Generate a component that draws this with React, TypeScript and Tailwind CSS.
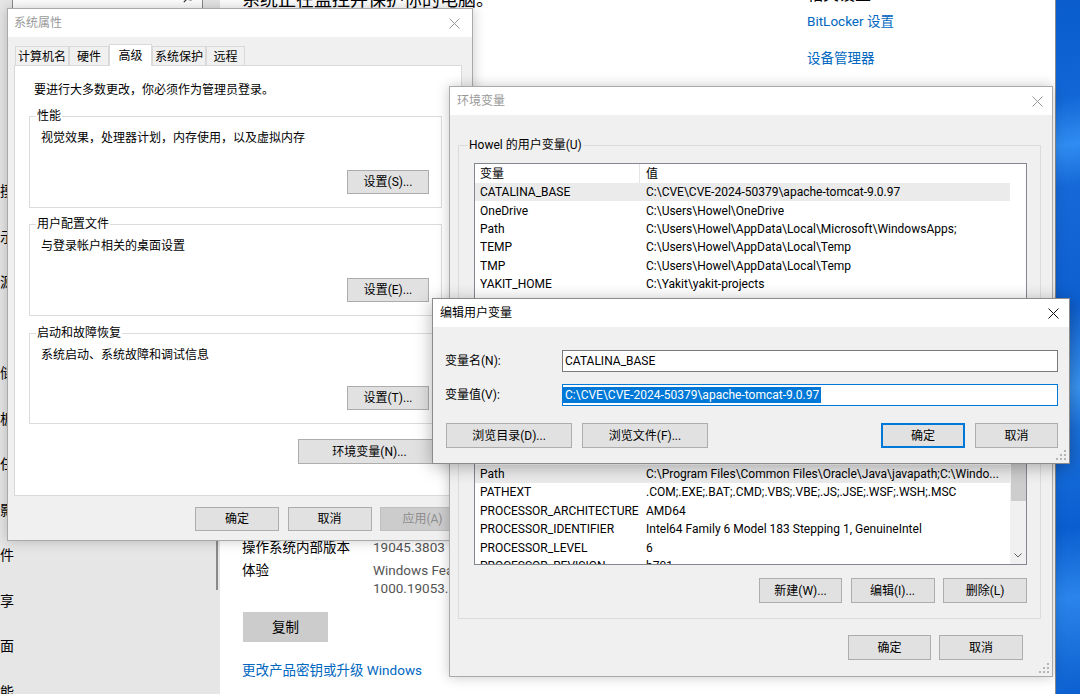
import React from 'react';

const CloseX = ({ color }: { color: string }) => (
  <svg width="11" height="11" viewBox="0 0 11 11">
    <path d="M0.5 0.5L10.5 10.5M10.5 0.5L0.5 10.5" stroke={color} strokeWidth="1" />
  </svg>
);

const Grip = () => (
  <svg width="11" height="11" viewBox="0 0 11 11" className="absolute right-[2px] bottom-[2px]">
    {[
      [8, 0],
      [8, 4],
      [4, 4],
      [8, 8],
      [4, 8],
      [0, 8],
    ].map(([x, y], i) => (
      <rect key={i} x={x} y={y} width="2" height="2" fill="#b4b4b4" />
    ))}
  </svg>
);

function Btn({
  children,
  className = '',
  variant,
}: {
  children: React.ReactNode;
  className?: string;
  variant?: 'default' | 'disabled';
}) {
  const look =
    variant === 'default'
      ? 'bg-[#e1e1e1] border border-[#0078d7] shadow-[inset_0_0_0_1px_#0078d7] text-black'
      : variant === 'disabled'
      ? 'bg-[#cccccc] border border-[#bfbfbf] text-[#8d8d8d]'
      : 'bg-[#e1e1e1] border border-[#adadad] text-black';
  return (
    <div className={`flex shrink-0 items-center justify-center text-[12px] ${look} ${className}`}>{children}</div>
  );
}

function Group({
  label,
  labelClass,
  className = '',
  children,
}: {
  label: string;
  labelClass: string;
  className?: string;
  children?: React.ReactNode;
}) {
  return (
    <div className={`relative border border-[#dcdcdc] ${className}`}>
      <span className={`absolute -top-[9px] px-[1px] leading-[16px] ${labelClass}`}>{label}</span>
      {children}
    </div>
  );
}

function Row({ name, value, selected }: { name: string; value: string; selected?: boolean }) {
  return (
    <div className={`flex h-[18.4px] shrink-0 items-center whitespace-nowrap ${selected ? 'bg-[#ebebeb]' : ''}`}>
      <div className="w-[165px] shrink-0 overflow-hidden pl-[5px]">{name}</div>
      <div className="flex-1 overflow-hidden pl-[6px]">{value}</div>
    </div>
  );
}

function ListHeader() {
  return (
    <div className="flex h-[19px] shrink-0 items-center">
      <div className="w-[165px] shrink-0 self-stretch flex items-center border-r border-[#e5e5e5] pl-[5px]">变量</div>
      <div className="pl-[6px]">值</div>
    </div>
  );
}

const userVars = [
  ['CATALINA_BASE', 'C:\\CVE\\CVE-2024-50379\\apache-tomcat-9.0.97'],
  ['OneDrive', 'C:\\Users\\Howel\\OneDrive'],
  ['Path', 'C:\\Users\\Howel\\AppData\\Local\\Microsoft\\WindowsApps;'],
  ['TEMP', 'C:\\Users\\Howel\\AppData\\Local\\Temp'],
  ['TMP', 'C:\\Users\\Howel\\AppData\\Local\\Temp'],
  ['YAKIT_HOME', 'C:\\Yakit\\yakit-projects'],
];

const sysVars = [
  ['NUMBER_OF_PROCESSORS', '20'],
  ['OS', 'Windows_NT'],
  ['Path', 'C:\\Program Files\\Common Files\\Oracle\\Java\\javapath;C:\\Windo...'],
  ['PATHEXT', '.COM;.EXE;.BAT;.CMD;.VBS;.VBE;.JS;.JSE;.WSF;.WSH;.MSC'],
  ['PROCESSOR_ARCHITECTURE', 'AMD64'],
  ['PROCESSOR_IDENTIFIER', 'Intel64 Family 6 Model 183 Stepping 1, GenuineIntel'],
  ['PROCESSOR_LEVEL', '6'],
  ['PROCESSOR_REVISION', 'b701'],
];

const navItems = ['触摸板', '显示', '电源和睡眠', '', '存储', '平板模式', '多任务处理', '投影到此电脑', '组件', '共享', '桌面', '功能'];

function SettingsBackdrop() {
  return (
    <div className="absolute inset-0 flex">
      {/* nav */}
      <aside className="relative w-[220px] shrink-0 bg-[#e6e6e6]">
        <div className="ml-[12px] mr-[17px] -mt-[20px] h-[32px] bg-white border border-[#8a8a8a] flex items-center justify-end pr-[6px]">
          <svg width="13" height="13" viewBox="0 0 13 13">
            <circle cx="7.5" cy="5.5" r="4.5" fill="none" stroke="#333" strokeWidth="1" />
            <path d="M4.3 8.7L0.8 12.2" stroke="#333" strokeWidth="1.2" />
          </svg>
        </div>
        <div className="-ml-[14px] mt-[157px] flex flex-col text-[14px] text-black">
          {navItems.map((t, i) => (
            <div key={i} className="h-[45.5px] flex items-center whitespace-nowrap">
              {t}
            </div>
          ))}
        </div>
        <div className="absolute right-[2px] top-[528px] w-[2px] h-[62px] bg-[#8a8a8a]" />
      </aside>

      {/* content */}
      <div className="flex w-[836px] shrink-0 border-r border-[#8a8a8a] bg-white text-[13.5px]">
        <div className="w-[565px] shrink-0 pl-[22px]">
          <div className="-mt-[12px] h-[24px] leading-[24px] text-[18px]">系统正在监控并保护你的电脑。</div>
          <div className="h-[525px]" />
          <div className="flex h-[20px] items-center">
            <span className="w-[131px] shrink-0">操作系统内部版本</span>
            <span className="text-[#555]">19045.3803</span>
          </div>
          <div className="mt-[4px] flex leading-[18px]">
            <span className="w-[131px] shrink-0">体验</span>
            <div className="text-[#555]">
              <div>Windows Feature Experience Pack</div>
              <div>1000.19053.1000.0</div>
            </div>
          </div>
          <div className="mt-[15px] ml-[1px] flex h-[30px] w-[85px] items-center justify-center bg-[#cccccc]">复制</div>
          <div className="mt-[18px] h-[20px] leading-[20px] text-[#0067c0]">更改产品密钥或升级 Windows</div>
        </div>
        <div className="pl-[22px] text-[#0067c0]">
          <div className="-mt-[14px] h-[18px] leading-[18px] text-[16px] text-black">相关设置</div>
          <div className="mt-[7px] h-[20px] leading-[20px]">BitLocker 设置</div>
          <div className="mt-[17px] h-[20px] leading-[20px]">设备管理器</div>
        </div>
      </div>

      {/* desktop */}
      <div className="flex-1 bg-[linear-gradient(172deg,#0a5ccc_0%,#1266d6_14%,#2f8cf0_21%,#1668d8_27%,#0d5fd0_44%,#3a95f2_56%,#1a70dc_62%,#0b5ed0_76%,#2a84ea_86%,#0c5fcf_100%)]" />
    </div>
  );
}

function SystemProps() {
  const tabs = [
    { t: '计算机名', w: 'w-[54px]' },
    { t: '硬件', w: 'w-[40px]' },
    { t: '高级', w: 'w-[43px]', active: true },
    { t: '系统保护', w: 'w-[54px]' },
    { t: '远程', w: 'w-[39px]' },
  ];
  return (
    <div className="absolute left-[7px] top-[8px] flex h-[533px] w-[466px] flex-col border border-[#aaaaaa] bg-[#f0f0f0] shadow-[0_0_12px_rgba(0,0,0,0.22)]">
      <div className="flex h-[28px] shrink-0 items-center justify-between bg-white pl-[6px] pr-[12px] text-[#999]">
        <span>系统属性</span>
        <CloseX color="#999" />
      </div>
      <div className="flex flex-col pl-[6px] pr-[10px] pt-[7px]">
        <div className="flex h-[22px] items-end pl-[1px]">
          {tabs.map((tab) =>
            tab.active ? (
              <div
                key={tab.t}
                className={`relative z-10 flex h-[22px] items-start justify-center border border-b-0 border-[#d9d9d9] bg-white pt-[2px] ${tab.w}`}
              >
                {tab.t}
              </div>
            ) : (
              <div
                key={tab.t}
                className={`flex h-[20px] items-center justify-center border border-b-0 border-[#d9d9d9] bg-[#f0f0f0] ${tab.w}`}
              >
                {tab.t}
              </div>
            )
          )}
        </div>
        <div className="-mt-[1px] flex h-[431px] flex-col border border-[#d9d9d9] bg-white pl-[14px] pr-[19px] pt-[16px]">
          <div className="h-[16px] pl-[5px] leading-[16px]">要进行大多数更改，你必须作为管理员登录。</div>

          <Group label="性能" labelClass="left-[6px] bg-white" className="mt-[18px] flex h-[92px] flex-col pl-[11px] pr-[12px] pt-[13px]">
            <div className="h-[16px] leading-[16px]">视觉效果，处理器计划，内存使用，以及虚拟内存</div>
            <Btn className="mt-[24px] h-[24px] w-[82px] self-end">设置(S)...</Btn>
          </Group>

          <Group label="用户配置文件" labelClass="left-[6px] bg-white" className="mt-[16px] flex h-[92px] flex-col pl-[11px] pr-[12px] pt-[13px]">
            <div className="h-[16px] leading-[16px]">与登录帐户相关的桌面设置</div>
            <Btn className="mt-[24px] h-[24px] w-[82px] self-end">设置(E)...</Btn>
          </Group>

          <Group label="启动和故障恢复" labelClass="left-[6px] bg-white" className="mt-[17px] flex h-[91px] flex-col pl-[11px] pr-[12px] pt-[13px]">
            <div className="h-[16px] leading-[16px]">系统启动、系统故障和调试信息</div>
            <Btn className="mt-[23px] h-[24px] w-[82px] self-end">设置(T)...</Btn>
          </Group>

          <Btn className="mt-[15px] mr-[1px] h-[25px] w-[143px] self-end">环境变量(N)...</Btn>
        </div>
        <div className="-mr-[3px] mt-[11px] flex justify-end gap-[8.5px]">
          <Btn className="h-[24px] w-[84px]">确定</Btn>
          <Btn className="h-[24px] w-[84px]">取消</Btn>
          <Btn className="h-[24px] w-[85px]" variant="disabled">
            应用(A)
          </Btn>
        </div>
      </div>
    </div>
  );
}

function EnvVars() {
  return (
    <div className="absolute left-[449px] top-[86px] flex h-[591px] w-[604px] flex-col border border-[#aaaaaa] bg-[#f0f0f0] shadow-[0_0_12px_rgba(0,0,0,0.22)]">
      <div className="flex h-[28px] shrink-0 items-center justify-between bg-white pl-[7px] pr-[9px] text-[#999]">
        <span>环境变量</span>
        <CloseX color="#999" />
      </div>
      <div className="flex flex-col pl-[8px] pr-[11px]">
        {/* user variables */}
        <Group label="Howel 的用户变量(U)" labelClass="left-[9px] bg-[#f0f0f0]" className="mt-[30px] flex flex-col pb-[16px] pl-[15px] pr-[13px] pt-[17px]">
          <div className="flex h-[160px] border border-[#828790] bg-white">
            <div className="flex flex-1 flex-col overflow-hidden">
              <ListHeader />
              {userVars.map(([n, v], i) => (
                <Row key={n} name={n} value={v} selected={i === 0} />
              ))}
            </div>
            <div className="w-[16px] shrink-0" />
          </div>
          <div className="mt-[8px] flex h-[25px] justify-end gap-[8.5px]">
            <Btn className="h-[25px] w-[83px]">新建(N)...</Btn>
            <Btn className="h-[25px] w-[84px]">编辑(E)...</Btn>
            <Btn className="h-[25px] w-[84px]">删除(D)</Btn>
          </div>
        </Group>

        {/* system variables */}
        <Group label="系统变量(S)" labelClass="left-[9px] bg-[#f0f0f0]" className="mt-[17px] flex flex-col pb-[15px] pl-[15px] pr-[13px] pt-[17px]">
          <div className="flex h-[157px] border border-[#828790] bg-white">
            <div className="flex flex-1 flex-col overflow-hidden">
              <ListHeader />
              {sysVars.map(([n, v]) => (
                <Row key={n} name={n} value={v} selected={n === 'Path'} />
              ))}
            </div>
            <div className="flex w-[16px] shrink-0 flex-col bg-[#f0f0f0]">
              <div className="flex h-[17px] shrink-0 items-center justify-center">
                <svg width="8" height="5" viewBox="0 0 8 5">
                  <path d="M0.5 4.5L4 1L7.5 4.5" fill="none" stroke="#606060" />
                </svg>
              </div>
              <div className="flex-1">
                <div className="mx-auto mt-[29px] h-[46px] w-[15px] bg-[#cdcdcd]" />
              </div>
              <div className="flex h-[17px] shrink-0 items-center justify-center">
                <svg width="8" height="5" viewBox="0 0 8 5">
                  <path d="M0.5 0.5L4 4L7.5 0.5" fill="none" stroke="#606060" />
                </svg>
              </div>
            </div>
          </div>
          <div className="mt-[13px] flex h-[25px] justify-end gap-[8.5px]">
            <Btn className="h-[25px] w-[83px]">新建(W)...</Btn>
            <Btn className="h-[25px] w-[84px]">编辑(I)...</Btn>
            <Btn className="h-[25px] w-[84px]">删除(L)</Btn>
          </div>
        </Group>

        <div className="mr-[18px] mt-[16px] flex justify-end gap-[8px]">
          <Btn className="h-[25px] w-[83px]">确定</Btn>
          <Btn className="h-[25px] w-[84px]">取消</Btn>
        </div>
      </div>
      <Grip />
    </div>
  );
}

function EditVar() {
  return (
    <div className="absolute left-[432px] top-[298px] flex h-[166px] w-[638px] flex-col border border-[#8c8c8c] bg-[#f0f0f0] shadow-[0_3px_16px_rgba(0,0,0,0.3)]">
      <div className="flex h-[28px] shrink-0 items-center justify-between bg-white pl-[7px] pr-[10px] text-black">
        <span>编辑用户变量</span>
        <CloseX color="#111" />
      </div>
      <div className="flex flex-col pl-[12px] pr-[11px] pt-[23px]">
        <div className="flex h-[22px] items-center">
          <span className="w-[117px] shrink-0">变量名(N):</span>
          <div className="flex h-[22px] flex-1 items-center border border-[#7a7a7a] bg-white pl-[2px]">CATALINA_BASE</div>
        </div>
        <div className="mt-[12px] flex h-[22px] items-center">
          <span className="w-[117px] shrink-0">变量值(V):</span>
          <div className="flex h-[22px] flex-1 items-center border border-[#0078d7] bg-white pl-[0px]">
            <span className="bg-[#0078d7] px-[2px] leading-[16px] text-white">C:\CVE\CVE-2024-50379\apache-tomcat-9.0.97</span>
          </div>
        </div>
        <div className="mt-[17px] flex h-[25px] items-center pl-[1px]">
          <Btn className="h-[25px] w-[126px]">浏览目录(D)...</Btn>
          <Btn className="ml-[10px] h-[25px] w-[126px]">浏览文件(F)...</Btn>
          <div className="flex-1" />
          <Btn className="h-[25px] w-[84px]" variant="default">
            确定
          </Btn>
          <Btn className="ml-[10px] h-[25px] w-[83px]">取消</Btn>
        </div>
      </div>
      <Grip />
    </div>
  );
}

export default function App() {
  return (
    <div className="relative h-[694px] w-[1080px] overflow-hidden bg-white text-[12px] text-black font-['Roboto','Noto_Sans_CJK_SC',sans-serif]">
      <SettingsBackdrop />
      <SystemProps />
      <EnvVars />
      <EditVar />
    </div>
  );
}
